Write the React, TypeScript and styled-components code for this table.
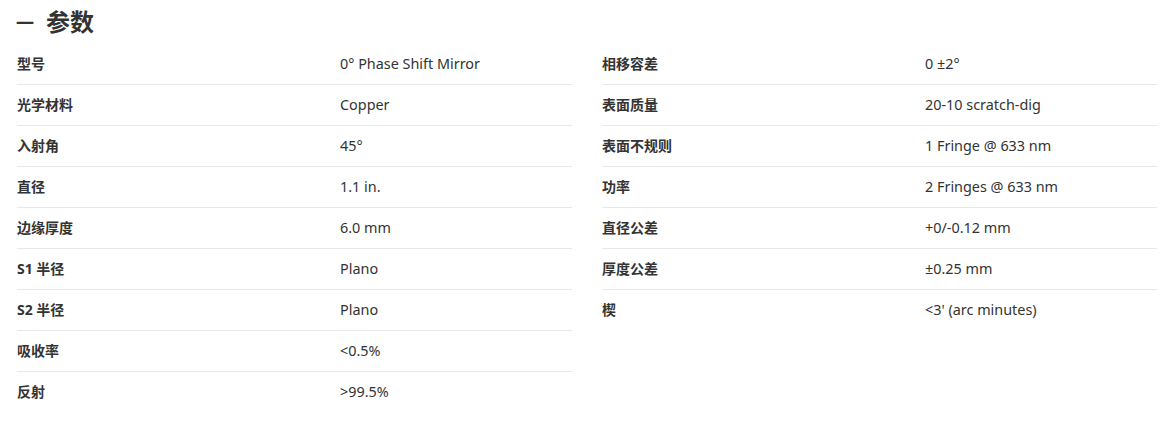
import React from "react";
import styled, { createGlobalStyle } from "styled-components";

const Global = createGlobalStyle`
  html, body { margin: 0; padding: 0; background: #fff; }
  body {
    font-family: "Noto Sans", "Noto Sans CJK SC", sans-serif;
    color: #333;
  }
`;

const Page = styled.div`
  padding: 5px 0 0 17px;
  width: 1140px;
`;

const Heading = styled.h2`
  margin: 0 0 5px;
  display: flex;
  align-items: center;
  font-family: "Noto Sans", "Noto Sans CJK SC", sans-serif;
  font-size: 24px;
  line-height: 34px;
  font-weight: 700;
  color: #333;
`;

const Dash = styled.span`
  font-family: "Noto Sans CJK SC", sans-serif;
  font-size: 18px;
  font-weight: 700;
  margin-left: -1px;
  margin-right: 12px;
`;

const Columns = styled.div`
  display: grid;
  grid-template-columns: 555px 555px;
  column-gap: 30px;
  align-items: start;
`;

const Table = styled.div`
  display: flex;
  flex-direction: column;
`;

const Row = styled.div<{ $last?: boolean }>`
  display: grid;
  grid-template-columns: 323px 1fr;
  height: 41px;
  padding-bottom: 2px;
  box-sizing: border-box;
  align-items: center;
  border-bottom: 1px solid ${(p) => (p.$last ? "transparent" : "#e8e8e8")};
`;

const Label = styled.div`
  font-family: "Noto Sans", "Noto Sans CJK SC", sans-serif;
  font-size: 14px;
  font-weight: 700;
  color: #333;
`;

const Value = styled.div`
  font-family: "Noto Sans", "Noto Sans CJK SC", sans-serif;
  font-size: 14.4px;
  font-weight: 400;
  color: #333;
`;

const left: [string, string][] = [
  ["型号", "0° Phase Shift Mirror"],
  ["光学材料", "Copper"],
  ["入射角", "45°"],
  ["直径", "1.1 in."],
  ["边缘厚度", "6.0 mm"],
  ["S1 半径", "Plano"],
  ["S2 半径", "Plano"],
  ["吸收率", "<0.5%"],
  ["反射", ">99.5%"],
];

const right: [string, string][] = [
  ["相移容差", "0 ±2°"],
  ["表面质量", "20-10 scratch-dig"],
  ["表面不规则", "1 Fringe @ 633 nm"],
  ["功率", "2 Fringes @ 633 nm"],
  ["直径公差", "+0/-0.12 mm"],
  ["厚度公差", "±0.25 mm"],
  ["楔", "<3' (arc minutes)"],
];

const SpecTable = ({ rows }: { rows: [string, string][] }) => (
  <Table>
    {rows.map(([k, v], i) => (
      <Row key={k} $last={i === rows.length - 1}>
        <Label>{k}</Label>
        <Value>{v}</Value>
      </Row>
    ))}
  </Table>
);

export default function App() {
  return (
    <>
      <Global />
      <Page>
        <Heading>
          <Dash>一</Dash>
          参数
        </Heading>
        <Columns>
          <SpecTable rows={left} />
          <SpecTable rows={right} />
        </Columns>
      </Page>
    </>
  );
}
